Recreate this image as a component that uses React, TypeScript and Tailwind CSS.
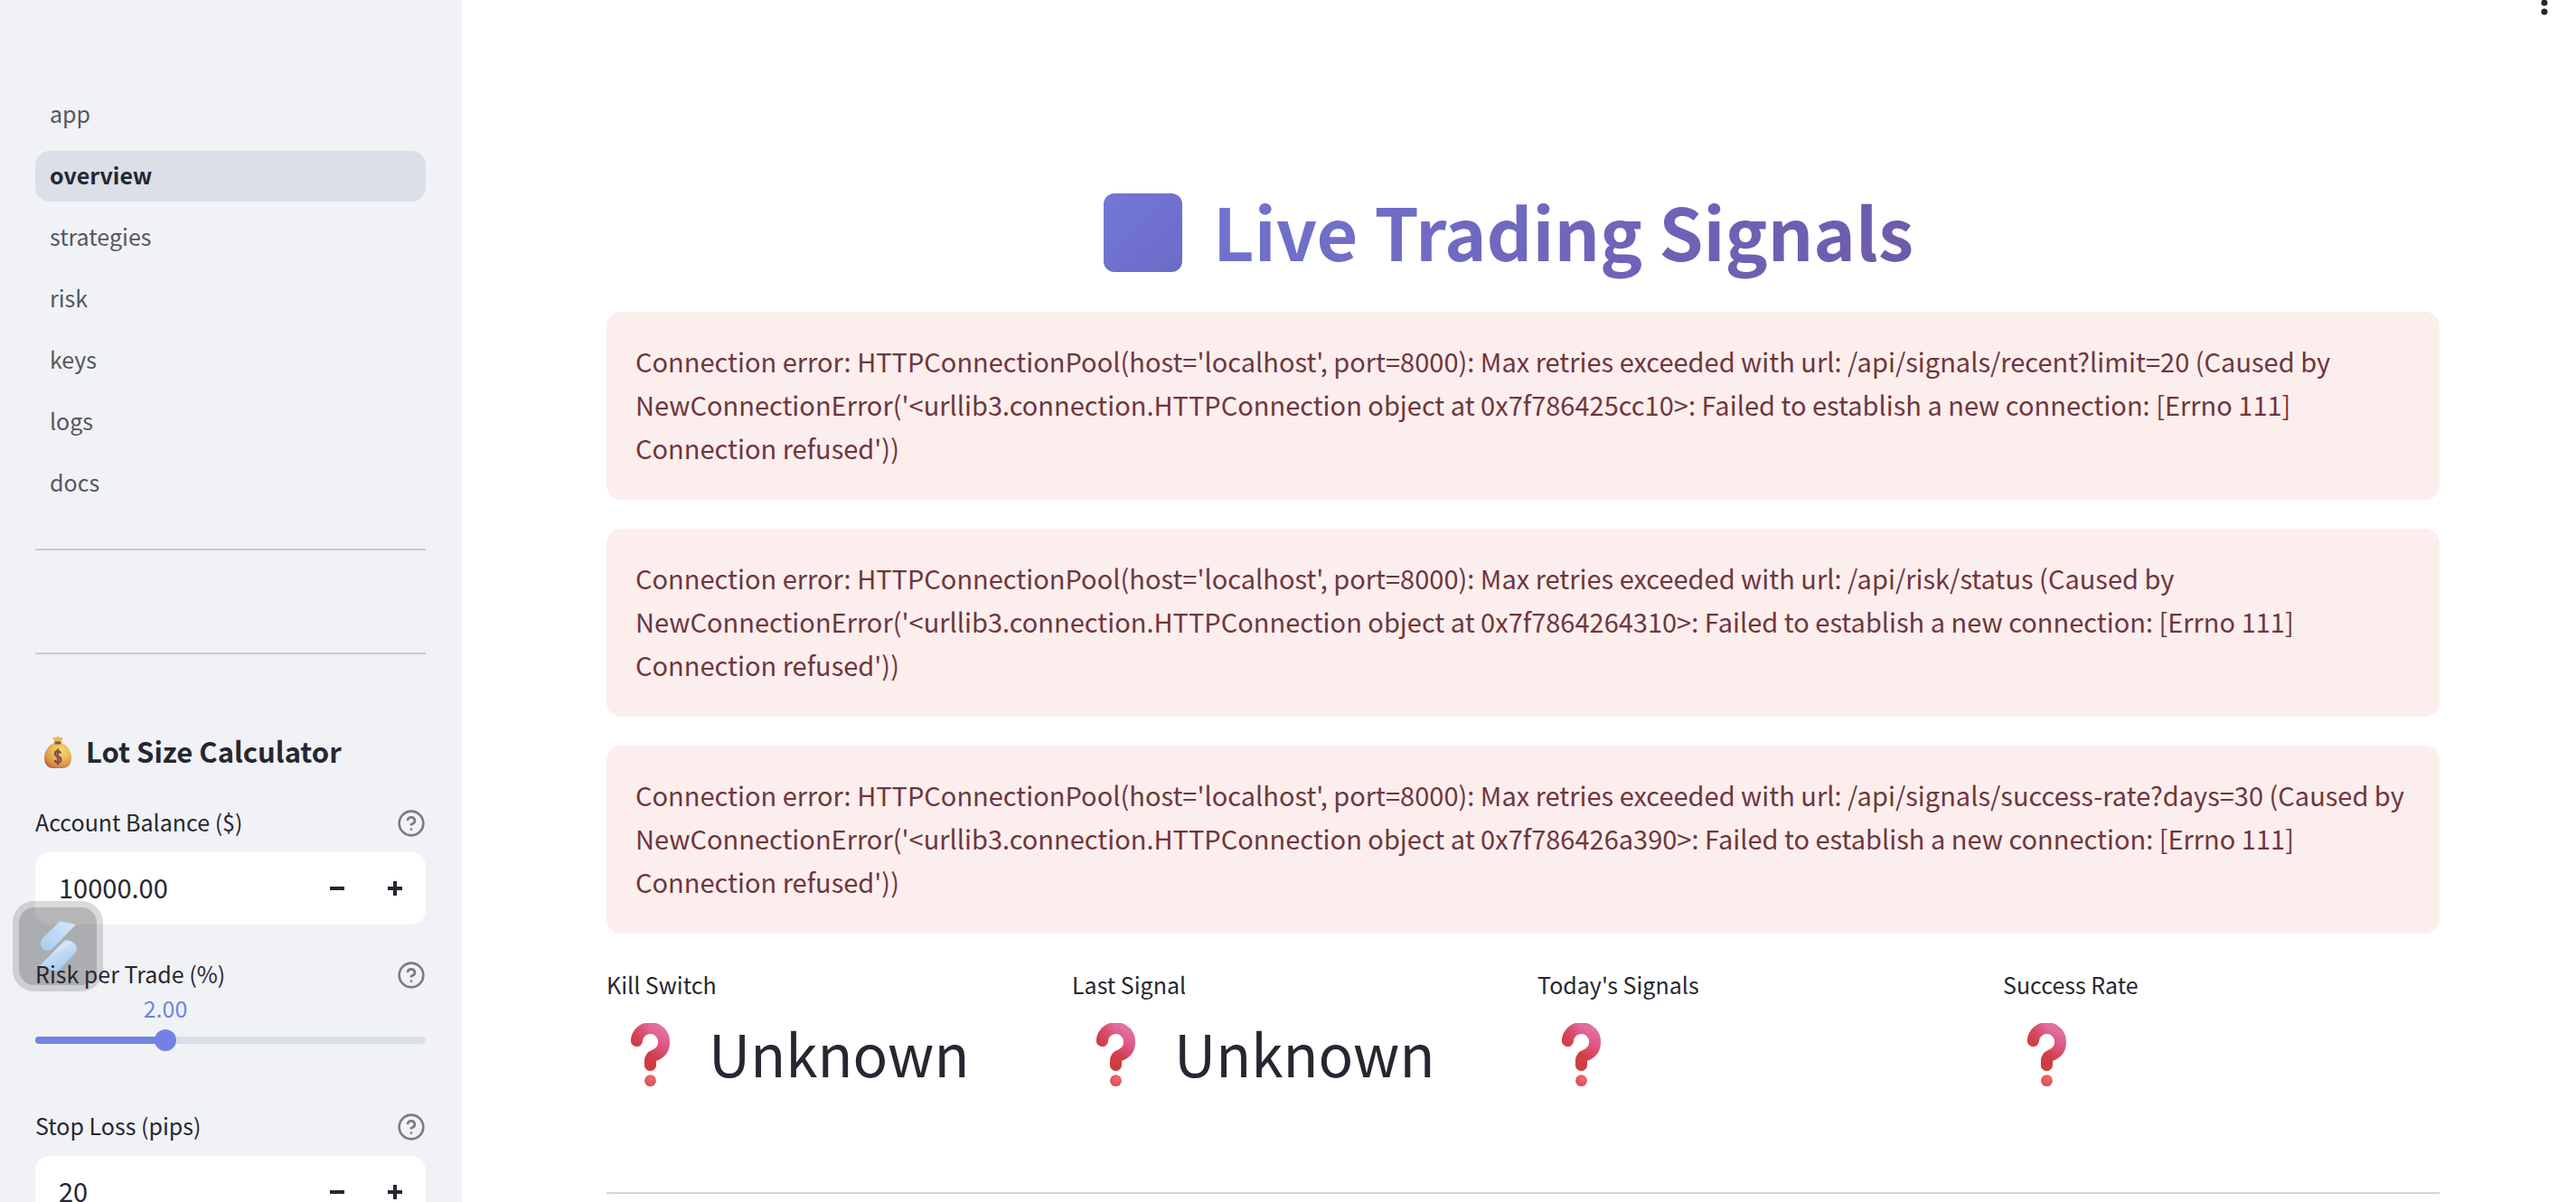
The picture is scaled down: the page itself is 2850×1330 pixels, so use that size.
import React, { useState } from "react";
import { CircleHelp } from "lucide-react";

const pages = ["app", "overview", "strategies", "risk", "keys", "logs", "docs"];

const errors = [
  { path: "/api/signals/recent?limit=20", address: "0x7f786425cc10" },
  { path: "/api/risk/status", address: "0x7f7864264310" },
  { path: "/api/signals/success-rate?days=30", address: "0x7f786426a390" },
];

const errorText = (path: string, address: string) =>
  `Connection error: HTTPConnectionPool(host='localhost', port=8000): Max retries exceeded with url: ${path} (Caused by NewConnectionError('<urllib3.connection.HTTPConnection object at ${address}>: Failed to establish a new connection: [Errno 111] Connection refused'))`;

const metrics = [
  { label: "Kill Switch", value: "Unknown" },
  { label: "Last Signal", value: "Unknown" },
  { label: "Today's Signals", value: "" },
  { label: "Success Rate", value: "" },
];

function MoneyBag() {
  return (
    <svg viewBox="0 0 30 36" className="ml-[10px] h-9 w-[30px] shrink-0" aria-hidden="true">
      <defs>
        <radialGradient id="bag" cx="0.62" cy="0.3" r="0.8">
          <stop offset="0" stopColor="#f3d96b" />
          <stop offset="0.45" stopColor="#ecb857" />
          <stop offset="0.8" stopColor="#d68b4b" />
          <stop offset="1" stopColor="#b0573f" />
        </radialGradient>
      </defs>
      <path d="M12 8 9.5 2.8Q9.300 1.600 11 2L13 2.300Q15-.6 17 2.300L19 2Q21 1.800 20.300 3L18 8Z" fill="#edb558" />
      <path d="M11.500 8C5 10 0 17 0 24.500 0 32 4 36 10 36H20C26 36 30 32 30 24.500 30 17 25 10 18.500 8Z" fill="url(#bag)" />
      <rect x="11.500" y="6.500" width="7" height="3" rx="1" fill="#85524b" />
      <path d="M18.200 19.500C17.500 17.800 16.500 17.200 15 17.200 13 17.200 11.800 18.400 11.800 20 11.800 24 18.400 22.300 18.400 26.500 18.400 28.500 17 29.700 15 29.700 13.200 29.700 12 28.800 11.500 27M15 14.500V32.500" fill="none" stroke="#85524b" strokeWidth="2.400" />
    </svg>
  );
}

function QuestionEmoji() {
  return (
    <svg viewBox="0 0 44 72" className="ml-[27px] h-[72px] w-11 shrink-0" role="img" aria-label="Unknown status">
      <defs>
        <linearGradient id="hook" x1="0.8" y1="0" x2="0.45" y2="1">
          <stop offset="0" stopColor="#e2709f" />
          <stop offset="0.4" stopColor="#dd5480" />
          <stop offset="0.75" stopColor="#d23f4c" />
          <stop offset="1" stopColor="#c93f3b" />
        </linearGradient>
        <linearGradient id="hookEdge" x1="-0.1" y1="0.6" x2="0.6" y2="0.3">
          <stop offset="0" stopColor="#cf3c44" stopOpacity="0.9" />
          <stop offset="1" stopColor="#cf3c44" stopOpacity="0" />
        </linearGradient>
        <radialGradient id="dot" cx="0.6" cy="0.3" r="0.7">
          <stop offset="0" stopColor="#ed7068" />
          <stop offset="1" stopColor="#dc4858" />
        </radialGradient>
      </defs>
      {["url(#hook)", "url(#hookEdge)"].map((paint) => (
        <path
          key={paint}
          d="M6.500 19.500A15 15 0 0 1 36.500 21.500C36.500 29 32.500 33 26.500 35.500Q21.500 37.500 21.500 42V46.500"
          fill="none"
          stroke={paint}
          strokeWidth="13"
          strokeLinecap="round"
          strokeLinejoin="round"
        />
      ))}
      <circle cx="21.500" cy="63.700" r="6.400" fill="url(#dot)" />
    </svg>
  );
}

function LabelRow({ id, text }: { id: string; text: string }) {
  return (
    <div className="relative z-20 flex h-12 items-center justify-between">
      <label htmlFor={id} className="pb-1 text-[25px] leading-10">
        {text}
      </label>
      <button type="button" aria-label={"Help: " + text} className="text-[#7b7c82]">
        <CircleHelp size={32} />
      </button>
    </div>
  );
}

function NumberField({ id, text, initial }: { id: string; text: string; initial: string }) {
  const [value, setValue] = useState(initial);
  return (
    <div>
      <LabelRow id={id} text={text} />
      <div className="mt-2 flex h-20 items-center rounded-2xl bg-white pr-0.5">
        <input
          id={id}
          value={value}
          onChange={(e) => setValue(e.target.value)}
          className="h-full min-w-0 flex-1 bg-transparent pb-1 pl-[26px] text-[29px] outline-none"
        />
        <button type="button" aria-label="Decrease" className="flex h-full w-16 items-center justify-center">
          <svg viewBox="0 0 16 16" className="size-4">
            <path d="M0 6h16v4H0z" fill="#262730" />
          </svg>
        </button>
        <button type="button" aria-label="Increase" className="flex h-full w-16 items-center justify-center">
          <svg viewBox="0 0 16 16" className="size-4">
            <path d="M6 0h4v6h6v4h-6v6H6v-6H0V6h6z" fill="#262730" />
          </svg>
        </button>
      </div>
    </div>
  );
}

function RiskSlider() {
  const [value, setValue] = useState(2);
  const percent = ((value - 0.5) / 4.5) * 100;
  return (
    <div>
      <LabelRow id="risk" text="Risk per Trade (%)" />
      <div className="relative h-6">
        <output
          htmlFor="risk"
          className="absolute -translate-x-1/2 text-[25px] leading-6 text-[#7282e4]"
          style={{ left: percent + "%" }}
        >
          {value.toFixed(2)}
        </output>
      </div>
      <div className="relative mt-3 flex h-6 items-center">
        <div className="h-2 w-full overflow-hidden rounded bg-[#dadee8]">
          <div className="h-full bg-[#7282e4]" style={{ width: percent + "%" }} />
        </div>
        <div
          className="absolute size-6 -translate-x-1/2 rounded-full bg-[#7282e4]"
          style={{ left: percent + "%" }}
        />
        <input
          id="risk"
          type="range"
          min={0.5}
          max={5}
          step={0.1}
          value={value}
          onChange={(e) => setValue(Number(e.target.value))}
          className="absolute inset-0 w-full cursor-pointer opacity-0"
        />
      </div>
    </div>
  );
}

function FloatingBadge() {
  return (
    <button
      type="button"
      aria-label="Open assistant"
      className="absolute top-[997px] left-[14px] z-10 size-[100px] rounded-3xl bg-[#04040c]/15 p-[7px]"
    >
      <span className="flex size-full items-center justify-center rounded-[17px] bg-[#04040c]/17">
        <svg viewBox="0 0 86 86" className="size-[86px]" aria-hidden="true">
          <defs>
            <linearGradient id="sheenTop" x1="0.9" y1="0" x2="0.2" y2="1">
              <stop offset="0" stopColor="#d3e5f7" />
              <stop offset="1" stopColor="#abcef2" />
            </linearGradient>
            <linearGradient id="sheenBottom" x1="0.3" y1="0.2" x2="0.7" y2="0.8">
              <stop offset="0" stopColor="#c3dbf5" />
              <stop offset="0.28" stopColor="#dbe9f9" />
              <stop offset="0.34" stopColor="#c9dff6" />
              <stop offset="1" stopColor="#a9cdf2" />
            </linearGradient>
          </defs>
          <path d="M45.700 15.300 63 19 37 45.500Q34 48.500 31 48C25 47 22 41 25 36Q25.500 34.500 28 32Z" fill="url(#sheenTop)" />
          <path d="M51.300 36C60 37 64 41 64 46Q64 49 61 52L44.500 69Q42.500 71 39.500 70L22.300 65.300Z" fill="url(#sheenBottom)" />
        </svg>
      </span>
    </button>
  );
}

export default function App() {
  return (
    <div className="relative flex h-screen overflow-hidden bg-white font-['Noto_Sans_CJK_SC',sans-serif] text-[#262730]">
      <aside className="relative w-[511px] shrink-0 overflow-hidden bg-[#f0f2f6] pr-10 pl-[39px]">
        <FloatingBadge />
        <nav className="flex flex-col gap-3 pt-[99px]">
          {pages.map((page) => (
            <a
              key={page}
              href={"#" + page}
              aria-current={page === "overview" ? "page" : undefined}
              className={
                page === "overview"
                  ? "flex h-14 items-center rounded-2xl bg-[#dadfe8] px-4 pb-0.5 text-[25px] font-bold"
                  : "flex h-14 items-center rounded-2xl px-4 pb-0.5 text-[25px] text-[#55575f]"
              }
            >
              {page}
            </a>
          ))}
        </nav>
        <hr className="mt-11 border-t-2 border-[#c9cbd0]" />
        <hr className="mt-[113px] border-t-2 border-[#c9cbd0]" />
        <h2 className="mt-20 flex h-[60px] items-center pb-1 text-[31px] font-bold">
          <MoneyBag />
          <span className="ml-4 pb-0.5">Lot Size Calculator</span>
        </h2>
        <div className="mt-[23px] flex flex-col">
          <NumberField id="balance" text="Account Balance ($)" initial="10000.00" />
          <div className="mt-8">
            <RiskSlider />
          </div>
          <div className="mt-[60px]">
            <NumberField id="stop" text="Stop Loss (pips)" initial="20" />
          </div>
        </div>
      </aside>

      <main className="min-w-0 flex-1 overflow-hidden pr-[151px] pl-40">
        <button type="button" aria-label="Main menu" className="absolute top-0 right-[30px] flex w-[10px] flex-col">
          <svg viewBox="0 0 10 20" className="h-5 w-[10px]">
            <circle cx="5" cy="3" r="3.500" fill="#262730" />
            <circle cx="5" cy="13" r="3.500" fill="#262730" />
          </svg>
        </button>
        <h1 className="mt-[203px] flex h-[108px] items-center justify-center pr-8">
          <span className="flex items-center bg-linear-135 from-[#7078d6] to-[#6d59a9] bg-clip-text text-[79px] leading-[108px] font-bold text-transparent">
            <span className="mr-[34px] size-[87px] rounded-xl bg-linear-135 from-[#7378d4] to-[#6c6bc8]" />
            <span className="pb-1">Live Trading Signals</span>
          </span>
        </h1>
        <div className="mt-[34px] flex flex-col gap-8">
          {errors.map((error) => (
            <div
              key={error.path}
              role="alert"
              className="rounded-2xl bg-[#fceeed] px-8 pt-[30px] pb-[34px] text-[29px] leading-[48px] text-[#6f363c]"
            >
              {errorText(error.path, error.address)}
            </div>
          ))}
        </div>
        <dl className="mt-8 grid grid-cols-4 gap-8">
          {metrics.map((metric) => (
            <div key={metric.label}>
              <dt className="text-[25px] leading-[48px]">{metric.label}</dt>
              <dd className="flex h-[110px] items-center text-[64px]">
                <QuestionEmoji />
                <span className="ml-[42px] pb-2">{metric.value}</span>
              </dd>
            </div>
          ))}
        </dl>
        <hr className="mt-24 border-t-2 border-[#d3d4d6]" />
      </main>
    </div>
  );
}
